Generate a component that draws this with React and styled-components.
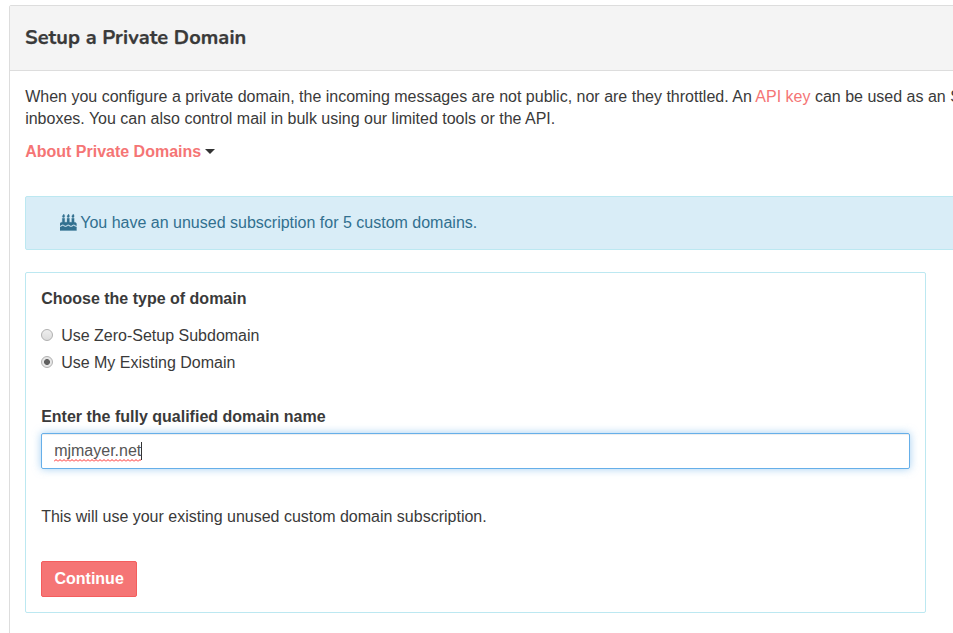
import React from "react";
import styled, { createGlobalStyle } from "styled-components";

const GlobalStyle = createGlobalStyle`
  *, *::before, *::after { box-sizing: border-box; }
  html, body { margin: 0; background: #fff; overflow: hidden; }
  body {
    font: 16px/22px "Liberation Sans", Arial, sans-serif;
    color: #3a3a3a;
  }
`;

const Page = styled.main`
  width: 1160px;
  height: 633px;
  padding: 5px 0 0 9px;
  overflow: hidden;
`;

const Panel = styled.section`
  height: 680px;
  border: 1px solid #ddd;
  border-radius: 2px;
`;

const PanelHeader = styled.header`
  height: 65px;
  padding: 0 15px;
  display: flex;
  align-items: center;
  background: #f4f4f4;
  border-bottom: 1px solid #ddd;
`;

const Title = styled.h1`
  margin: 0;
  font: 700 20px/24px Nunito, "Open Sans", sans-serif;
  letter-spacing: 0.09px;
  -webkit-text-stroke: 0.25px currentColor;
`;

const PanelBody = styled.div`
  padding: 15px 15px 15px 15.15px;
`;

const Intro = styled.p`
  margin: 0;
  white-space: nowrap;
`;

const Link = styled.a`
  color: #f57575;
  text-decoration: none;
`;

const AboutRow = styled.div`
  display: flex;
  align-items: center;
  gap: 4px;
  margin-top: 11px;
  font-weight: 700;
`;

const Caret = styled.span`
  border: 5px solid transparent;
  border-top-color: #333;
  border-bottom: 0;
  margin-bottom: 1px;
`;

const Alert = styled.div`
  display: flex;
  align-items: center;
  gap: 3.6px;
  height: 54px;
  margin-top: 33px;
  padding-left: 34px;
  color: #31708f;
  background: #d9edf7;
  border: 1px solid #bce8f1;
  border-radius: 2px;
`;

const Cake = styled.svg`
  width: 16.5px;
  height: 16.5px;
  flex: none;
  margin-bottom: 1px;
  fill: currentColor;
  stroke: currentColor;
  stroke-width: 30;
`;

const Card = styled.form`
  width: 901px;
  height: 341px;
  margin-top: 22px;
  padding: 15px;
  border: 1px solid #bce8f1;
  border-radius: 2px;
`;

const Label = styled.div`
  font-weight: 700;
`;

const Options = styled.div`
  display: grid;
  gap: 5px;
  margin: 15px 0 32px;
`;

const Option = styled.label`
  display: flex;
  align-items: center;
  gap: 8px;
`;

const Radio = styled.input`
  appearance: none;
  width: 12px;
  height: 12px;
  margin: 0 0 2px;
  border: 1px solid #b0b0b0;
  border-radius: 50%;
  background: ${({ checked }) =>
    checked
      ? "radial-gradient(circle, #606060 2.6px, #e6e6e6 3.3px)"
      : "linear-gradient(#eee, #dcdcdc)"};
`;

const Field = styled.div`
  display: flex;
  align-items: center;
  height: 36px;
  margin-top: 5px;
  padding: 0 12px;
  color: #555;
  border: 1px solid #66afe9;
  border-radius: 2px;
  box-shadow: inset 0 1px 1px rgba(0, 0, 0, 0.075), 0 0 8px rgba(102, 175, 233, 0.6);
  outline: 0;
`;

const Misspelled = styled.span`
  position: relative;
`;

const Squiggle = styled.svg`
  position: absolute;
  left: 0;
  bottom: 0;
  width: 100%;
  height: 3px;
`;

const TextCursor = styled.span`
  width: 1px;
  height: 18px;
  background: #333;
`;

const Note = styled.p`
  margin: 37px 0 33px;
`;

const Button = styled.button`
  display: block;
  width: 96px;
  height: 36px;
  padding: 0 0 1px;
  color: #fff;
  background: #f57575;
  border: 1px solid #f45d5d;
  border-radius: 2px;
  font: inherit;
  font-weight: 700;
`;

function CakeIcon() {
  return (
    <Cake viewBox="0 0 1792 1792" aria-hidden="true">
      <path d="M1792 1408v384H0v-384q45 0 85-14t59-27.500 47-37.500q30-27 51.500-38t56.500-11q24 0 44 7t31 15 33 27q29 25 47 38t58 27 86 14q45 0 86-14.500t58-27 48-37.500q21-19 32.500-27t31-15 43.500-7q35 0 56.500 11t51.500 38q28 24 47 37.500t59 27.500 85 14q46 0 86-14t58-27 47-38q22-19 33-27t31-15 44-7q35 0 56.500 11t51.500 38q28 24 47 37.500t59 27.500 85 14zM1792 1088v192q-35 0-56-11t-51-38q-28-24-47.500-37.500t-59-27.500-85.500-14q-45 0-85 14t-58.500 27-47.500 38q-30 27-51 38t-56 11q-35 0-57-11t-51-38q-28-24-47.500-37.500t-59-27.500-85.500-14q-45 0-85 14t-59 27.500-47 37.500q-30 27-51.500 38t-56.500 11q-35 0-56.500-11t-51.500-38q-29-25-47.500-38t-58.500-27-85-14q-46 0-85.500 14t-59 27.500-47.500 37.500q-30 27-51 38t-56 11v-192q0-80 56-136t136-56h64V448h256v448h256V448h256v448h256V448h256v448h64q80 0 136 56t56 136z" />
      <path d="M512 224q0 77-36 118.500T384 384q-53 0-90.500-37.500T256 256q0-29 9.500-51t23.500-34 31-28 31-31.500 23.500-44.500T384 0q38 0 83 74t45 150zM1024 224q0 77-36 118.500T896 384q-53 0-90.500-37.500T768 256q0-29 9.500-51t23.500-34 31-28 31-31.500 23.500-44.500T896 0q38 0 83 74t45 150zM1536 224q0 77-36 118.500t-92 41.500q-53 0-90.500-37.500T1280 256q0-29 9.500-51t23.500-34 31-28 31-31.500 23.500-44.500 9.500-67q38 0 83 74t45 150z" />
    </Cake>
  );
}

const options = ["Use Zero-Setup Subdomain", "Use My Existing Domain"];

export default function App() {
  return (
    <>
      <GlobalStyle />
      <Page>
        <Panel>
          <PanelHeader>
            <Title>Setup a Private Domain</Title>
          </PanelHeader>
          <PanelBody>
            <Intro>
              When you configure a private domain, the incoming messages are not public, nor are they
              throttled. An <Link href="#">API key</Link> can be used as an S
              <br />
              inboxes. You can also control mail in bulk using our limited tools or the API.
            </Intro>
            <AboutRow>
              <Link href="#">About Private Domains</Link>
              <Caret />
            </AboutRow>
            <Alert>
              <CakeIcon />
              <span>You have an unused subscription for 5 custom domains.</span>
            </Alert>
            <Card>
              <Label>Choose the type of domain</Label>
              <Options>
                {options.map((text, i) => (
                  <Option key={text}>
                    <Radio type="radio" name="type" checked={i === 1} readOnly />
                    {text}
                  </Option>
                ))}
              </Options>
              <Label>Enter the fully qualified domain name</Label>
              <Field role="textbox">
                <Misspelled>
                  mjmayer.net
                  <Squiggle aria-hidden="true">
                    <defs>
                      <pattern id="wave" width="4" height="3" patternUnits="userSpaceOnUse">
                        <path d="M0 2.500L2 .5L4 2.500" fill="none" stroke="#f22" />
                      </pattern>
                    </defs>
                    <rect width="100%" height="3" fill="url(#wave)" />
                  </Squiggle>
                </Misspelled>
                <TextCursor />
              </Field>
              <Note>This will use your existing unused custom domain subscription.</Note>
              <Button type="button">Continue</Button>
            </Card>
          </PanelBody>
        </Panel>
      </Page>
    </>
  );
}
